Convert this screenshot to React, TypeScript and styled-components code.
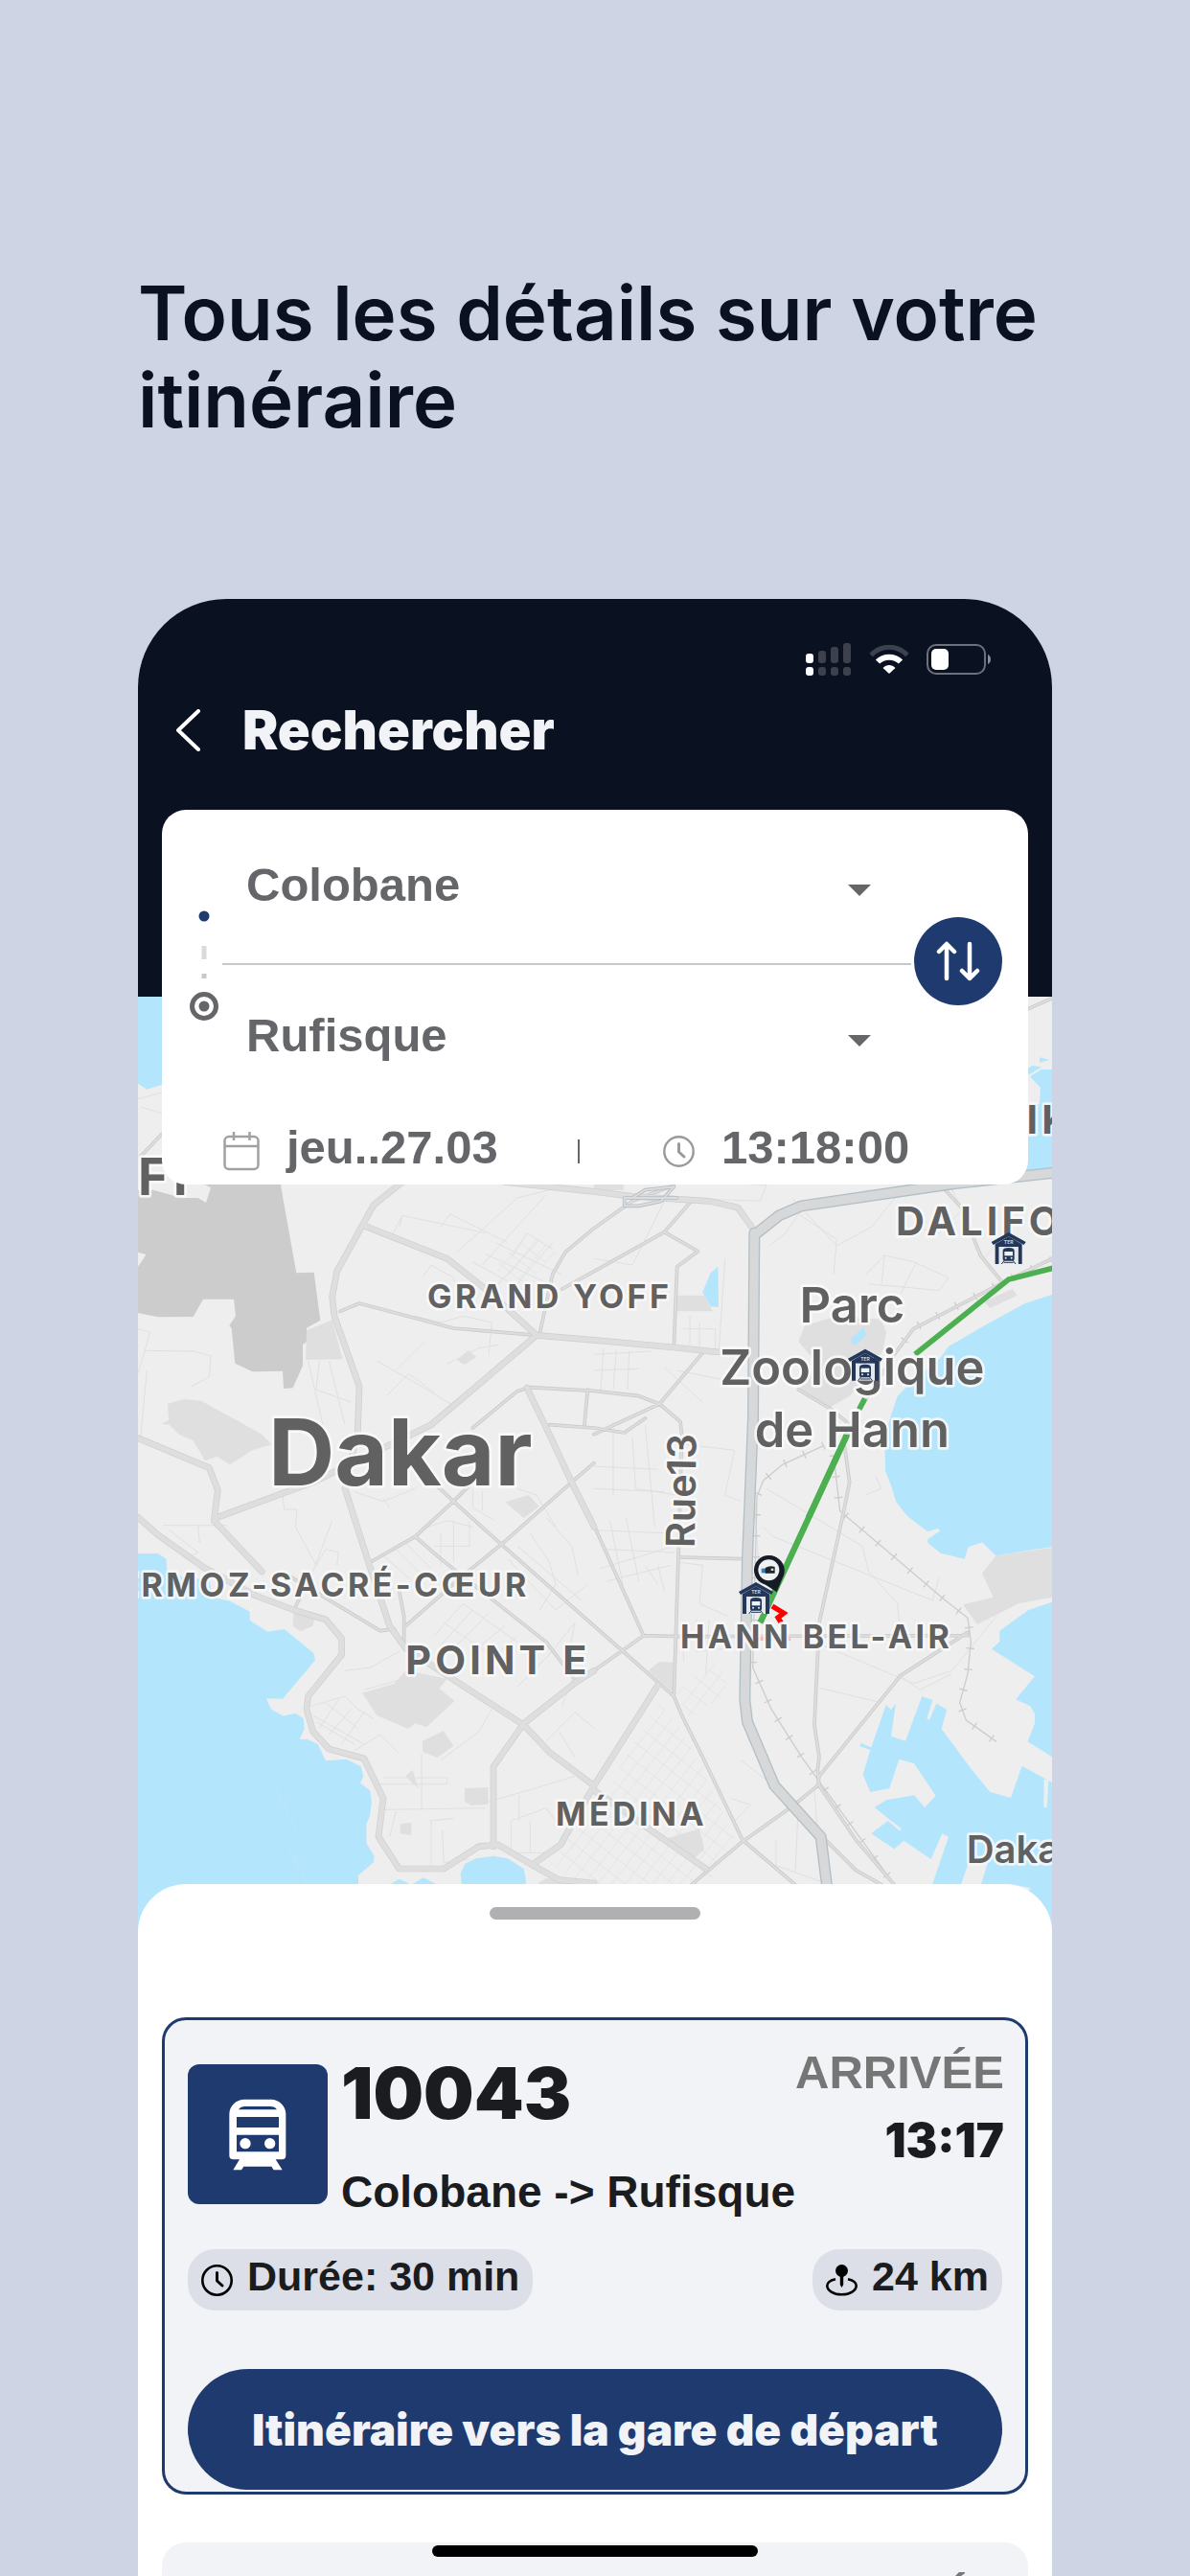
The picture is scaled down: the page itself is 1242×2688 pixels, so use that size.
import React from "react";
import styled, { createGlobalStyle } from "styled-components";

const color = {
  page: "#ced4e4",
  ink: "#0a1120",
  navy: "#1e3a6e",
  text: "#1b1c20",
  field: "#656669",
  muted: "#757777",
  surface: "#f2f3f7",
  chip: "#dcdfe8",
  land: "#eeeeee",
  water: "#b3e5fc",
  park: "#dfdfdf",
};

const sans = `"Liberation Sans", Arial, sans-serif`;
const display = `Inter, "Open Sans", sans-serif`;

const GlobalStyle = createGlobalStyle`
  *, *::before, *::after { box-sizing: border-box; }
  body { margin: 0; background: ${color.page}; font-family: ${sans}; }
  button, select { margin: 0; padding: 0; border: 0; background: none; font: inherit; color: inherit; cursor: pointer; }
  svg { display: block; flex: none; }
`;

const Page = styled.main`
  display: flex;
  flex-direction: column;
  height: 100vh;
  padding: 281px 144px 0;
  overflow: hidden;
  background: ${color.page};
`;

const Headline = styled.h1`
  margin: 0;
  font: 600 78px/91px ${display};
  color: ${color.ink};
`;

const Phone = styled.section`
  position: relative;
  display: flex;
  flex-direction: column;
  flex: 1;
  min-height: 0;
  margin-top: 162px;
  border-radius: 92px 92px 0 0;
  overflow: hidden;
  background: #fff;
`;

const Header = styled.header`
  flex: none;
  padding: 46px 63px 243px 40px;
  background: ${color.ink};
`;

const StatusBar = styled.div`
  display: flex;
  justify-content: flex-end;
  align-items: center;
  gap: 18px;
  height: 34px;
`;

const NavBar = styled.nav`
  display: flex;
  align-items: center;
  gap: 43px;
  height: 70px;
  margin-top: 22px;
`;

const BackButton = styled.button`
  display: flex;
`;

const NavTitle = styled.h2`
  margin: 0;
  font: 900 56px/70px ${display};
  font-variation-settings: "opsz" 14;
  color: ${color.surface};
`;

const SearchCard = styled.form`
  position: relative;
  z-index: 1;
  flex: none;
  margin: -195px 25px 0;
  border-radius: 25px;
  background: #fff;
  color: ${color.field};
  font: 700 49px/70px ${sans};
`;

const RouteArea = styled.div`
  display: flex;
  align-items: flex-start;
  padding: 0 27px 0 29px;
`;

const RailSlot = styled.div`
  padding: 105px 4px 0 0;
`;

const Fields = styled.div`
  flex: 1;
  padding-top: 43px;
`;

const SelectField = styled.label`
  display: grid;
  grid-template-columns: 1fr 24px;
  align-items: center;
  height: 70px;
  padding: 0 42px 0 25px;

  select {
    grid-area: 1 / 1 / 2 / 3;
    height: 70px;
    appearance: none;
    outline: none;
  }

  svg {
    grid-area: 1 / 2 / 2 / 3;
    pointer-events: none;
  }
`;

const Divider = styled.hr`
  height: 2px;
  margin: 47px 0 38px;
  border: 0;
  background: #c6c6cc;
`;

const SwapButton = styled.button`
  display: grid;
  place-items: center;
  flex: none;
  width: 92px;
  height: 92px;
  margin: 112px 0 0 3px;
  border-radius: 50%;
  background: ${color.navy};
`;

const WhenRow = styled.div`
  display: grid;
  grid-template-columns: 370px 2px 1fr;
  align-items: center;
  height: 78px;
  margin-top: 43px;
  padding: 0 27px 0 64px;
`;

const WhenButton = styled.button<{ $inset?: number }>`
  display: flex;
  align-items: center;
  gap: 28px;
  padding-left: ${(p) => p.$inset ?? 0}px;
  white-space: nowrap;

  svg { margin-top: 8px; }
`;

const Separator = styled.span`
  height: 25px;
  margin-top: 8px;
  background: ${color.field};
`;

const MapArea = styled.div`
  flex: none;
  height: 980px;
  margin-top: -196px;
  background: ${color.land};

  svg { width: 100%; height: 100%; }
`;

const Sheet = styled.section`
  position: relative;
  flex: none;
  margin-top: -54px;
  padding: 24px 25px 0;
  border-radius: 50px 50px 0 0;
  background: #fff;
`;

const Handle = styled.div`
  width: 220px;
  height: 13px;
  margin: 0 auto 102px;
  border-radius: 7px;
  background: #b0b0b2;
`;

const TripCard = styled.article<{ $selected?: boolean }>`
  margin-bottom: 50px;
  padding: 26px 24px 2px;
  border: 3px solid ${(p) => (p.$selected ? color.navy : color.surface)};
  border-radius: 25px;
  background: ${color.surface};
  color: ${color.text};
`;

const TripHead = styled.div`
  display: flex;
  align-items: flex-start;
`;

const TrainBadge = styled.div`
  display: grid;
  place-items: center;
  flex: none;
  width: 146px;
  height: 146px;
  margin: 20px 14px 0 0;
  border-radius: 12px;
  background: ${color.navy};
`;

const TripInfo = styled.div`
  flex: 1;
  padding-top: 10px;
  white-space: nowrap;
`;

const TrainNumber = styled.h3`
  margin: 0 0 35px;
  font: 900 74px/80px ${display};
  font-variation-settings: "opsz" 14;
`;

const TripRoute = styled.p`
  margin: 0;
  font: 700 46px/56px ${sans};
`;

const Arrival = styled.dl`
  margin: 0;
  text-align: right;

  dt {
    font: 700 49px/56px ${sans};
    color: ${color.muted};
  }

  dd {
    margin: 14px 0 0;
    font: 900 49px/60px ${display};
    font-variation-settings: "opsz" 14;
  }
`;

const ChipRow = styled.div`
  display: flex;
  justify-content: space-between;
  margin-top: 32px;
`;

const Chip = styled.div`
  display: flex;
  align-items: center;
  gap: 15px;
  height: 64px;
  padding: 0 14px;
  border-radius: 28px;
  background: ${color.chip};

  span {
    padding-bottom: 8px;
    font: 700 43px/56px ${sans};
  }
`;

const DirectionsButton = styled.button`
  display: block;
  width: 100%;
  height: 126px;
  margin-top: 61px;
  border-radius: 63px;
  background: ${color.navy};
  color: ${color.surface};
  font: 900 46px/56px ${display};
  font-variation-settings: "opsz" 14;
  white-space: nowrap;
`;

const HomeIndicator = styled.div`
  position: absolute;
  bottom: 20px;
  left: 50%;
  width: 340px;
  height: 12px;
  margin-left: -170px;
  border-radius: 6px;
  background: #000;
`;

const SignalIcon = () => (
  <svg width="48" height="34" viewBox="0 0 48 34" aria-label="Signal">
    {[0, 1, 2, 3].map((i) => (
      <g key={i} fill={i === 0 ? "#fff" : "#3c414d"}>
        <rect x={i * 13} y={11 - i * 4 + (i === 0 ? 0 : 1)} width="8" height={10 + i * 4 - (i === 0 ? 0 : 1)} rx="3" />
        <rect x={i * 13} y="25" width="8" height="9" rx="3" />
      </g>
    ))}
  </svg>
);

const WifiIcon = () => (
  <svg width="42" height="30" viewBox="0 0 42 30" aria-label="Wi-Fi" fill="none">
    <path d="M2 10.500C13-.5 29-.5 40 10.500" stroke="#3c414d" strokeWidth="5" />
    <path d="M9 17.500c6.500-6.500 17.500-6.500 24 0" stroke="#fff" strokeWidth="6" />
    <path d="M14.500 24c3.500-4 9.500-4 13 0L21 30z" fill="#fff" />
  </svg>
);

const BatteryIcon = () => (
  <svg width="68" height="32" viewBox="0 0 68 32" aria-label="Batterie">
    <rect x="1" y="1" width="60" height="30" rx="9" fill="none" stroke="#6d717b" strokeWidth="2" />
    <rect x="5" y="5" width="18" height="22" rx="5" fill="#fff" />
    <path d="M64 11c4 1.500 4 8.500 0 10z" fill="#8b8e97" />
  </svg>
);

const ChevronIcon = () => (
  <svg width="26" height="44" viewBox="0 0 26 44" fill="none" stroke="#fff" strokeWidth="4" strokeLinecap="round" strokeLinejoin="round">
    <path d="M23 2 2 22l21 20" />
  </svg>
);

const RailIcon = () => (
  <svg width="30" height="116" viewBox="0 0 30 116">
    <circle cx="15" cy="6" r="5.500" fill={color.navy} />
    <path d="M12.500 37h5v14h-5z" fill="#dadada" />
    <path d="M12.500 66h5v5h-5z" fill="#c8c8ca" />
    <circle cx="15" cy="100" r="12.500" fill="none" stroke={color.field} strokeWidth="5" />
    <circle cx="15" cy="100" r="5.500" fill={color.field} />
  </svg>
);

const CaretIcon = () => (
  <svg width="24" height="24" viewBox="0 0 24 24" fill={color.field}>
    <path d="M0 12h24L12 24z" />
  </svg>
);

const SwapIcon = () => (
  <svg width="46" height="42" viewBox="0 0 46 42" fill="none" stroke="#fff" strokeWidth="4.500" strokeLinecap="round" strokeLinejoin="round">
    <path d="M11 39V3M3 11l8-8 8 8M35 3v36M27 31l8 8 8-8" />
  </svg>
);

const CalendarIcon = () => (
  <svg width="38" height="42" viewBox="0 0 38 42" fill="none" stroke="#a0a1a3" strokeWidth="2.500">
    <rect x="1.500" y="6" width="35" height="34" rx="4.500" />
    <path d="M1.500 16h35" />
    <path d="M11 1v9M27.500 1v9" />
  </svg>
);

const ClockIcon = ({ stroke, thin }: { stroke: string; thin?: boolean }) => (
  <svg width="33" height="33" viewBox="0 0 33 33" fill="none" stroke={stroke} strokeLinecap="round" strokeLinejoin="round">
    <circle cx="16.500" cy="16.500" r="15.200" strokeWidth={thin ? 2.4 : 2.6} />
    <path d="M16.500 8.500v8.500l5.500 5" strokeWidth="3" />
  </svg>
);

const PinIcon = () => (
  <svg width="33" height="33" viewBox="0 0 33 33">
    <circle cx="16.500" cy="6.500" r="6.500" fill="#000" />
    <path d="M14.800 11h3.400v10l-1.700 3-1.700-3z" fill="#000" />
    <path d="M10 15.200C4.500 16.500 1.300 19 1.300 22c0 5 6.700 9.300 15.200 9.300S31.700 27 31.700 22c0-3-3.200-5.500-8.700-6.800" fill="none" stroke="#000" strokeWidth="2.600" />
  </svg>
);

const TrainIcon = () => (
  <svg width="60" height="75" viewBox="297 690 180 225">
    <path fill="#fff" fillRule="evenodd" d="M345 692h84c24 0 46 20 46 46v130q0 12-12 12h-20l21 33h-27l-7-11h-87l-7 11h-26l20-33h-20q-12 0-12-12V738c0-26 22-46 47-46zM348 714c-10 0-16 3-21 10h120c-5-7-11-10-21-10zM321 747v33h132v-33zM321 803v53h132v-53z" />
    <circle cx="348" cy="830" r="17" fill="#fff" />
    <circle cx="425" cy="830" r="17" fill="#fff" />
  </svg>
);

/* City map. One drawing unit is a third of a screen pixel. */

const waterA = ["12,40 87,40 87,335 40,350 12,332"];
const waterB = [
  "1434,288 1400,288 1365,310 1398,345 1395,395 1350,400 1350,606 1434,600",
  "1395,250 1427,258 1395,266",
  "1350,290 1372,276 1402,280 1362,304",
  "388,905 365,925 340,985 365,1030 390,1032",
  "805,1130 845,1095 852,1120 820,1150 806,1145",
  "1434,992 1350,1020 1230,1085 1110,1155 1085,1190 990,1270 950,1310 930,1370 915,1420 910,1440 912,1545 930,1590 945,1640 980,1685 1045,1735 1075,1725 1085,1732 1045,1758 1045,1770 1085,1802 1160,1820 1172,1783 1215,1768 1258,1810 1434,1782",
];
const waterC = [
  "12,423 75,423 100,440 103,475 160,500 235,505 245,560 300,572 362,605 362,632 418,668 470,660 562,735 567,757 465,878 414,877 428,910 467,932 505,923 530,940 533,972 518,1005 542,1005 575,1020 600,1072 665,1067 710,1090 718,1120 708,1142 738,1165 744,1200 738,1245 727,1270 727,1330 752,1370 750,1390 702,1430 702,1620 12,1620",
  "1022,1425 1035,1395 1070,1378 1125,1370 1170,1378 1220,1410 1226,1440 1226,1500 1030,1500",
  "790,1465 830,1442 868,1460 905,1438 960,1465",
];
const waterD = [
  "1434,575 1360,600 1270,665 1270,700 1245,722 1380,808 1320,880 1365,900 1380,925 1380,955 1358,1012 1434,1060",
  "1434,1140 1340,1088 1305,1188 1240,1170 1175,1090 1088,972 1105,912 1072,893 1050,945 1042,940 1060,882 1027,870 975,1010 930,995 945,892 930,912 914,898 868,1030 836,1017 832,1027 865,1038 842,1115 865,1170 925,1158 955,1067 1002,1080 1070,1182 1035,1218 1002,1180 915,1195 878,1218 962,1285 958,1292 920,1260 868,1300 940,1348 970,1322 1055,1380 1090,1300 1110,1310 1060,1457 1060,1620 1434,1620",
];

const airport =
  "12,665 60,665 150,690 200,690 225,705 240,658 205,640 457,640 508,925 563,923 583,1073 540,1097 540,1140 528,1150 528,1215 497,1285 468,1287 465,1232 370,1234 316,1208 305,1098 298,1090 318,1060 312,1007 216,1007 185,1062 75,1063 12,1050 12,905 38,867 12,860";

const parks = [
  "620,1072 653,1195 537,1197 540,1105",
  "85,1398 108,1385 105,1335 155,1320 210,1325 400,1430 430,1462 370,1480 300,1525 260,1500 222,1512 185,1450 140,1430 110,1400",
  "1010,1198 1045,1168 1072,1188 1035,1212",
  "715,2240 815,2210 850,2170 980,2195 955,2225 1003,2265 915,2347 880,2335 858,2352 760,2310",
  "903,2390 968,2358 1000,2405 950,2442 903,2425",
  "1035,2538 1108,2535 1108,2588 1055,2592 1035,2580",
  "833,2650 868,2645 868,2685 833,2680",
  "1162,1642 1235,1620 1268,1655 1220,1692",
  "500,1980 565,2000 560,2030 520,2047 497,2030",
  "1610,2170 1645,2142 1690,2145 1690,2240",
  "1670,2695 1770,2665 1785,2730 1750,2760",
  "1700,995 1785,995 1812,1045 1700,1045",
  "1440,640 1532,640 1532,666 1440,666",
  "2080,1140 2100,1090 2200,1060 2340,1070 2355,1110 2345,1165 2310,1230 2240,1310 2180,1345 2080,1290 2140,1210",
  "2660,1015 2750,975 2765,995 2680,1035",
  "2698,1810 2874,1785 2874,1940 2770,1960 2640,2025 2595,1963 2690,1940 2655,1865",
  "850,2500 872,2480 890,2540",
  "1265,2835 1290,2820 1440,2830 1440,2850 1265,2850",
];

const minor =
  "M800,820 840,745 1100,800 M840,745 830,780 M960,780 990,740 1170,830 M905,935 930,900 1000,940 1020,1000 M1010,860 1200,690 1320,660 M1090,900 1290,680 M1060,890 1230,985 M1100,865 1300,960 M1130,830 1340,930 M1180,880 1230,800 1310,850 M1140,960 1270,820 M1190,970 1310,830 M880,1060 960,1080 1030,1060 1120,1080 1110,1180 M980,1210 1080,1160 1140,1150 M820,1230 910,1140 M760,1200 900,1280 1000,1340 M790,1310 860,1240 940,1300 M545,1200 600,1440 M580,1200 570,1290 680,1330 M610,1200 660,1400 M12,1100 50,1110 30,1180 12,1240 M30,1168 190,1170 240,1185 235,1250 180,1280 M12,380 87,360 M20,405 87,425 M40,1230 20,1440" +
  "M90,1715 290,1715 M200,1715 205,1770 M110,1730 200,1800 160,1820 M465,1620 470,1665 510,1665 505,1720 570,1840 600,1790 640,1800 635,1840 M560,1860 620,1700 M690,1610 780,1640 880,1600 M780,1630 800,1660 M920,1720 980,1700 1060,1720 M940,1780 1050,1780 1050,1700 M960,1740 960,1840 M1000,1700 1000,1830 M1060,1600 1060,1660 1130,1700 M1090,1610 1090,1670 M780,1810 860,1880 M820,1790 900,1870 M850,1770 930,1850 M750,1880 800,1850 M1170,1820 1320,1980 1420,1900 M1200,1780 1400,1950 M1240,1740 1300,1830 1320,1900 1270,1980 M1290,1690 1370,1780 1390,1870 M1200,1600 1260,1620 1320,1720 M940,2060 1030,1960 1200,2080 M960,2090 1060,1980 M1000,2100 1110,1990 M1050,2120 1160,2030 M1100,2150 1200,2060 M970,2020 1160,2150 M1200,2220 1300,2120 1380,2020 1360,2120" +
  "M555,2280 660,2250 700,2290 750,2320 M560,2310 720,2400 M580,2350 640,2260 M610,2370 680,2290 M650,2400 720,2300 M690,2420 770,2370 830,2430 M570,2330 690,2400 M600,2270 700,2350 M900,2430 900,2600 M780,2505 980,2505 980,2525 770,2525 M780,2605 1100,2600 M820,2610 800,2690 M925,2640 1000,2632 M930,2640 930,2780 M965,2670 970,2770 1050,2760 M960,2450 1080,2360 1120,2290 M1205,2560 1205,2640 M1180,2640 1290,2600 1320,2640 M1180,2740 1300,2740 M1180,2640 1180,2740 M1240,2640 1240,2740 M1110,2580 1250,2540 1380,2500 M1290,2390 1380,2300 1440,2350 M1330,2360 1380,2440 M1340,2280 1370,2200 M720,2230 900,2180 M660,2170 740,2160 830,2110" +
  "M1440,620 1980,650 1960,700 1700,690 M1660,700 1560,900 1440,880 M1850,880 1830,1180 M1720,1100 1820,1100 1820,1180 M1740,1060 1740,1150 M1770,1080 1770,1160 M1440,1180 1620,1170 M1470,1160 1460,1300 M1510,1165 1500,1290 M1550,1170 1545,1290 M1440,1230 1580,1225 M1700,1230 1850,1260 M1660,1220 1780,1330 M1990,840 2040,800 2080,740 2200,820 2190,930 M2060,690 2200,840 2310,780 2390,680 M2290,930 2350,870 2440,890 2550,940 2520,980 2420,970 2300,960 M2350,870 2340,960 M2450,890 2400,990 M2440,780 2520,800 2600,720 M2560,660 2660,880 2730,800 M1500,1390 1500,1620 M1560,1440 1570,1600 1700,1620 M1600,1400 1630,1720 M1710,1460 1880,1480 1850,1620 1900,1640 M1440,1530 1640,1540 M1440,1600 1660,1610 M1440,1730 1680,1740 M1460,1850 1690,1780 M1480,1890 1680,1840 M1490,1700 1530,1900 M1540,1690 1580,1890 M1600,1840 1640,1900 M1640,1840 1660,1920 M1480,1790 1690,1800" +
  "M1700,1830 1780,1840 1770,1960 1860,2000 M1720,2020 1720,2140 M1760,2010 1760,2110 1860,2100 M1800,2010 1790,2180 M1980,1600 2280,1780 2300,1860 2390,1960 2400,2060 M1970,1720 2000,1750 2500,1950 2520,1880 M2150,2225 2340,2270 M2130,2080 2440,2210 2560,2170 2700,2000 M1940,1600 1960,1900 M2390,2180 2460,2230 2560,2180 M2320,1560 2340,1600 2290,1620 M1900,2450 1990,2520 M1870,2570 1930,2590 1880,2640 M2010,2700 2010,2780 2150,2830 M2080,2590 2070,2800 M2130,2540 2140,2680";

const secondary =
  "M645,1045 705,1020 1000,1098 1260,1120 M1270,1115 1310,930 1350,860 1440,785 1560,700 1690,650 M1340,975 1440,920 1660,797 1740,705 M1660,797 1765,857 1700,905 1690,1155 M1060,1410 1200,1295 1235,1283 1440,1294 1580,1310 1645,1335 1780,1175 M1440,1430 1645,1335 1710,1390 1715,1430 1705,1780 1690,2250 M1420,1290 1410,1400 M1300,1400 1440,1410 1535,1425 1600,1380 M1710,1815 1900,1820 M740,1830 880,1750 1000,1640 1100,1540 M880,1750 960,1820 1290,2080 1385,2205 M1440,1520 1370,1580 1150,1775 1050,1855 850,2030 M850,1500 1000,1640 1150,1775 1440,2030 1520,2100 1690,2250 1715,2310 1775,2430 1840,2565 1905,2700 2070,2840 M480,1870 770,2045 815,2040 M830,1920 845,2000 845,2080 M520,1940 500,1980 M1440,1715 1595,2060 1705,2063 M1705,2063 2610,2060 M1440,2170 1595,2060 M1745,2840 1905,2705 2060,2595 2140,2530 2145,2500 2400,2185 2610,2050 M2225,1470 2240,1580 2220,1680 2145,2020 2130,2340 2145,2440 2140,2480 2145,2530 2260,2700 2380,2840 M2060,2595 2260,2795 2340,2840 M2540,665 2590,720 2650,870 2715,950 M2874,880 2730,950 2440,1100 2380,1180 2240,1400 M2080,1290 2180,1350 2230,1390 M20,560 87,490 M2800,98 2874,65";

const primary =
  "M840,640 750,712 715,775 635,920 620,1000 627,1060 705,1280 700,1420 660,1600 740,1850 800,2030 850,2100 1080,2250 1220,2340 1300,2425 1440,2530 M715,775 980,880 1100,975 1260,1120 1440,1135 1690,1158 1820,1172 1920,1175 M12,1442 235,1535 262,1605 250,1700 400,1860 M1260,1120 930,1400 560,1580 255,1692 M12,1690 75,1745 220,1848 380,1935 500,1980 600,2010 650,2070 650,2120 545,2250 540,2290 560,2360 610,2415 720,2445 780,2570 765,2690 830,2790 970,2790 1080,2720 1140,2715 1250,2780 1330,2825 1440,2835 M1440,2170 1385,2205 1220,2335 1125,2470 1125,2720 M1230,1285 1300,1430 1370,1580 1440,1720 M1250,2775 1335,2715 1440,2530 1640,2215 M1440,2545 1790,2790 M1160,640 1440,670 1560,685 1800,700 1890,720 1940,790";

const trunk =
  "M1942,800 1938,1380 1920,1820 1912,2260 1920,2330 2005,2530 2150,2690 2170,2850 M1950,800 2020,745 2090,715 2570,645 2874,612";

const rail =
  "M2160,1465 2030,1525 1970,1575 1950,1625 1937,2160 1995,2290 2090,2440 2140,2510 2380,2840 M2190,1495 2210,1670 2375,1810 2540,1950 2610,2005 2620,2080 2610,2180 2585,2270 2605,2325 2700,2392 M2874,885 2730,948 2440,1098 2380,1178";

const Poly = ({ list, fill }: { list: string[]; fill: string }) => (
  <g fill={fill}>
    {list.map((points) => (
      <polygon key={points} points={points} />
    ))}
  </g>
);

const Road = ({ d, edge, fill, width, rim = 5 }: { d: string; edge: string; fill: string; width: number; rim?: number }) => (
  <g fill="none" strokeLinejoin="round" strokeLinecap="round">
    <path d={d} stroke={edge} strokeWidth={width} />
    <path d={d} stroke={fill} strokeWidth={width - rim} />
  </g>
);

const PlaceName = styled.text<{ $size: number; $district?: boolean; $weight?: number }>`
  font-family: ${display};
  font-weight: ${(p) => p.$weight ?? (p.$district ? 700 : 600)};
  font-size: ${(p) => p.$size}px;
  letter-spacing: ${(p) => (p.$district ? "0.1em" : "normal")};
  fill: #616161;
  stroke: rgba(250, 250, 250, 0.85);
  stroke-width: 16px;
  stroke-linejoin: round;
  paint-order: stroke;
`;

const Station = ({ x, y }: { x: number; y: number }) => (
  <g transform={`translate(${x} ${y})`} fill="#22375a">
    <path d="M0 1 54 31l-6 9L0 14l-48 26-6-9z" />
    <path d="M-42 38 0 14l42 24v62H30V46h-60v54h-12z" />
    <path d="M-30 46h60v54h-60z" fill="#e4e7ec" />
    <path d="M-18 58q0-9 18-9t18 9v26q0 6-6 6h-24q-6 0-6-6z" />
    <path d="M-13 61h26v13h-26z" fill="#eef1f5" />
    <circle cx="-9" cy="81" r="3" fill="#eef1f5" />
    <circle cx="9" cy="81" r="3" fill="#eef1f5" />
    <path d="m-13 88-9 12M13 88l9 12M-15 95h30" stroke="#22375a" strokeWidth="3" />
    <text y="38" textAnchor="middle" fontFamily="Inter, sans-serif" fontWeight="700" fontSize="15" fill="#c9d2de">TER</text>
  </g>
);

const CityMap = () => (
  <svg viewBox="12 60 2862 2940" preserveAspectRatio="xMidYMid slice" role="img" aria-label="Carte de Dakar">
    <defs>
      <pattern id="blocks" width="34" height="46" patternUnits="userSpaceOnUse" patternTransform="rotate(38)">
        <path d="M0 0H34M0 0V46" stroke="#dedede" strokeWidth="3" fill="none" />
      </pattern>
    </defs>
    <rect x="12" y="60" width="2862" height="2940" fill={color.land} />
    <polygon points={airport} fill="#cccccc" />
    <Poly list={parks} fill={color.park} />
    <Poly list={waterA} fill={color.water} />
    <g transform="translate(1440 0)"><Poly list={waterB} fill={color.water} /></g>
    <g transform="translate(0 1380)"><Poly list={waterC} fill={color.water} /></g>
    <g transform="translate(1440 1380)">
      <Poly list={waterD} fill={color.water} />
      <Poly list={["1145,1470 1175,1385 1232,1395 1208,1470", "1409,1130 1423,1132 1418,1218 1408,1218", "1290,1455 1367,1470 1360,1480"]} fill={color.land} />
    </g>
    <g fill="url(#blocks)">
      <polygon points="1300,2770 1470,2560 1640,2270 1700,2330 1780,2480 1890,2720 1790,2840 1400,2840" />
      <polygon points="1700,2240 1800,2140 1870,2180 1830,2260 1740,2320" />
      <polygon points="1120,910 1240,800 1320,860 1230,960" />
    </g>
    <path d={minor} fill="none" stroke="#e0e0e0" strokeWidth="3" />
    <path d="M428,2505 510,2675M483,2722 540,2838" stroke="#cfe6ee" strokeWidth="2" />
    <path d={rail} fill="none" stroke="#cdcdcd" strokeWidth="4" />
    <path d={rail} fill="none" stroke="#cdcdcd" strokeWidth="26" strokeDasharray="4 62" />
    <Road d={secondary} edge="#cbcbcb" fill="#dddddd" width={11} />
    <Road d={primary} edge="#cecece" fill="#dedede" width={20} rim={4} />
    <Road d="M1560,690 1600,665 1690,655 1650,700 1580,715 1535,715 1535,690 1700,690" edge="#b3bfc6" fill="#dcdcdc" width={11} />
    <Road d={trunk} edge="#b3bfc6" fill="#d6d8d9" width={36} rim={8} />
    <g fill="none" stroke="#4caf50" strokeWidth="17">
      <path d="M2880,909 2738,945 2445,1180" />
      <path d="M2288,1318 2270,1352" />
    </g>
    <path d="M1998,1968 2034,1990 2016,2004 2026,2020" fill="none" stroke="#ff0000" strokeWidth="16" />
    <path d="M2026,2020 2048,2070H1945" fill="none" stroke="#ffb0b0" strokeWidth="12" />
    <path d="M2235,1425 1960,2020" stroke="#4caf50" strokeWidth="19" />

    <PlaceName x="232" y="680" $size={160} $district textAnchor="end">YOFF</PlaceName>
    <PlaceName x="2702" y="490" $size={124} $district>PIKINE</PlaceName>
    <PlaceName x="2385" y="807" $size={124} $district>DALIFORT</PlaceName>
    <PlaceName x="918" y="1036" $size={102} $district>GRAND YOFF</PlaceName>
    <g textAnchor="middle">
      <PlaceName x="2248" y="1080" $size={152}>Parc</PlaceName>
      <PlaceName x="2248" y="1275" $size={152}>Zoologique</PlaceName>
      <PlaceName x="2248" y="1470" $size={152}>de Hann</PlaceName>
    </g>
    <PlaceName x="420" y="1590" $size={288} $weight={700}>Dakar</PlaceName>
    <PlaceName x="1238" y="1939" $size={102} $district textAnchor="end">MERMOZ-SACRÉ-CŒUR</PlaceName>
    <PlaceName x="850" y="2181" $size={124} $district>POINT E</PlaceName>
    <PlaceName x="1320" y="2655" $size={102} $district>MÉDINA</PlaceName>
    <PlaceName x="1710" y="2100" $size={102} $district>HANN BEL-AIR</PlaceName>
    <PlaceName x="2606" y="2771" $size={120}>Dakar</PlaceName>
    <PlaceName transform="translate(1754 1786) rotate(-89)" $size={124}>Rue13</PlaceName>
    <path d="M2231,1433 2112,1690" stroke="#4caf50" strokeWidth="19" />

    <Station x={2738} y={797} />
    <Station x={2289} y={1162} />
    <path d="M2012,1924 1975,1900A46,46 0 1 1 2030,1880Z" fill="#161c27" />
    <circle cx="1987" cy="1855" r="46" fill="#161c27" />
    <circle cx="1987" cy="1855" r="33" fill="#eef0f2" />
    <path d="M1964 1850h24v14h-24z" fill="#2f80c2" />
    <path d="M1976 1848q14-8 30-3v20h-30z" fill="#20242b" />
    <path d="M1994 1850h8v7h-8z" fill="#cfd6dc" />
    <Station x={1947} y={1892} />
  </svg>
);

type Trip = { number: string; route: string; arrival: string; duration: string; distance: string };

const trips: Trip[] = [
  { number: "10043", route: "Colobane -> Rufisque", arrival: "13:17", duration: "30 min", distance: "24 km" },
  { number: "10045", route: "Colobane -> Rufisque", arrival: "13:27", duration: "30 min", distance: "24 km" },
];

const TripItem = ({ trip, selected }: { trip: Trip; selected: boolean }) => (
  <TripCard $selected={selected}>
    <TripHead>
      <TrainBadge><TrainIcon /></TrainBadge>
      <TripInfo>
        <TrainNumber>{trip.number}</TrainNumber>
        <TripRoute>{trip.route}</TripRoute>
      </TripInfo>
      <Arrival>
        <dt>ARRIVÉE</dt>
        <dd>{trip.arrival}</dd>
      </Arrival>
    </TripHead>
    <ChipRow>
      <Chip><ClockIcon stroke="#000" /><span>Durée: {trip.duration}</span></Chip>
      <Chip><PinIcon /><span>{trip.distance}</span></Chip>
    </ChipRow>
    <DirectionsButton type="button">Itinéraire vers la gare de départ</DirectionsButton>
  </TripCard>
);

const StationSelect = ({ label, value }: { label: string; value: string }) => (
  <SelectField>
    <select aria-label={label} defaultValue={value}>
      <option>{value}</option>
    </select>
    <CaretIcon />
  </SelectField>
);

export default function App() {
  return (
    <>
      <GlobalStyle />
      <Page>
        <Headline>Tous les détails sur votre itinéraire</Headline>
        <Phone>
          <Header>
            <StatusBar>
              <SignalIcon />
              <WifiIcon />
              <BatteryIcon />
            </StatusBar>
            <NavBar>
              <BackButton type="button" aria-label="Retour"><ChevronIcon /></BackButton>
              <NavTitle>Rechercher</NavTitle>
            </NavBar>
          </Header>
          <SearchCard>
            <RouteArea>
              <RailSlot><RailIcon /></RailSlot>
              <Fields>
                <StationSelect label="Départ" value="Colobane" />
                <Divider />
                <StationSelect label="Destination" value="Rufisque" />
              </Fields>
              <SwapButton type="button" aria-label="Inverser"><SwapIcon /></SwapButton>
            </RouteArea>
            <WhenRow>
              <WhenButton type="button"><CalendarIcon />jeu..27.03</WhenButton>
              <Separator />
              <WhenButton type="button" $inset={87}><ClockIcon stroke="#98999b" thin />13:18:00</WhenButton>
            </WhenRow>
          </SearchCard>
          <MapArea><CityMap /></MapArea>
          <Sheet>
            <Handle />
            {trips.map((trip, i) => (
              <TripItem key={trip.number} trip={trip} selected={i === 0} />
            ))}
          </Sheet>
          <HomeIndicator />
        </Phone>
      </Page>
    </>
  );
}
